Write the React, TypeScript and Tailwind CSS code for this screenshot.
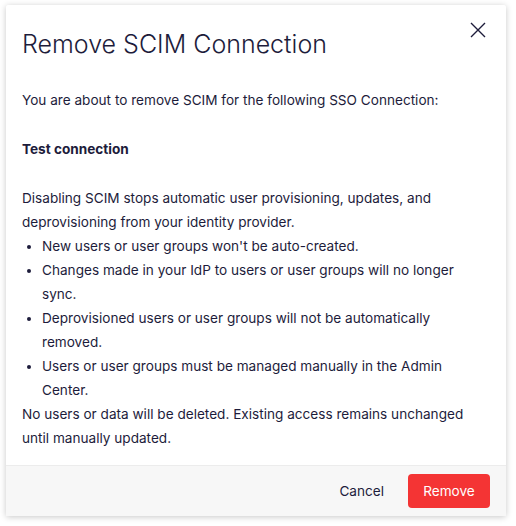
export default function App() {
  return (
    <div
      className="w-[516px] h-[526px] bg-white relative overflow-hidden"
      style={{ fontFamily: "Inter, 'Liberation Sans', sans-serif" }}
    >
      <div className="absolute left-[6px] top-[5px] w-[500px] bg-white rounded-[2px] shadow-[0_1px_6px_rgba(0,0,0,0.22)] text-[#1d1c3b] flex flex-col">
        <div className="relative px-4 pt-[23px]">
          <h2 className="text-[25px] leading-[32px] font-light">Remove SCIM Connection</h2>
          <button className="absolute right-[18px] top-[15px] p-[1px]">
            <svg width="18" height="18" viewBox="0 0 18 18" fill="none" stroke="#1d1c3b" strokeWidth="1.4">
              <path d="M2 2L16 16M16 2L2 16" />
            </svg>
          </button>
        </div>
        <div className="px-4 pt-[28px] pb-[15px] text-[13.6px] leading-[24px]">
          <p className="mb-[25px]">You are about to remove SCIM for the following SSO Connection:</p>
          <p className="mb-[25px] font-bold">Test connection</p>
          <p>Disabling SCIM stops automatic user provisioning, updates, and deprovisioning from your identity provider.</p>
          <ul className="list-disc pl-5">
            <li>New users or user groups won't be auto-created.</li>
            <li>Changes made in your IdP to users or user groups will no longer sync.</li>
            <li>Deprovisioned users or user groups will not be automatically removed.</li>
            <li>Users or user groups must be managed manually in the Admin Center.</li>
          </ul>
          <p>No users or data will be deleted. Existing access remains unchanged until manually updated.</p>
        </div>
        <div className="bg-[#f7f7f7] border-t border-[#ececec] px-4 h-[51px] flex items-center justify-end gap-6">
          <button className="text-[13.6px] text-[#1d1c3b]">Cancel</button>
          <button className="h-[34px] w-[82px] rounded-[4px] bg-[#f43434] text-white text-[13.6px]">Remove</button>
        </div>
      </div>
    </div>
  );
}
